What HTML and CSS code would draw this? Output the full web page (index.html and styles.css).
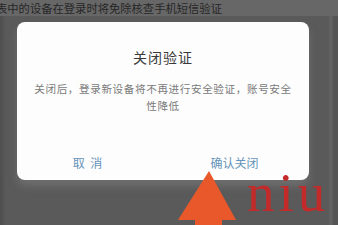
FILE: index.html
```html
<!DOCTYPE html>
<html lang="zh">
<head>
<meta charset="utf-8">
<link rel="stylesheet" href="styles.css">
</head>
<body>
<div class="page">
  <div class="topline">表中的设备在登录时将免除核查手机短信验证</div>
  <div class="stage">
    <div class="dialog">
      <div class="title">关闭验证</div>
      <div class="message"><span class="line">关闭后，登录新设备将不再进行安全验证，账号安全</span><span class="line">性降低</span></div>
      <div class="actions">
        <div class="btn">取 消</div>
        <div class="btn">确认关闭</div>
      </div>
    </div>
  </div>
  <svg class="arrow" width="60" height="55" viewBox="0 0 60 55">
    <polygon points="31,0 58,49 0,49" fill="#e9582b"/>
    <rect x="17" y="46" width="27" height="9" fill="#e9582b"/>
  </svg>
  <div class="mark">niu</div>
</div>
</body>
</html>
```
FILE: styles.css
```css
html, body {
  margin: 0;
  padding: 0;
}
body {
  width: 338px;
  height: 225px;
  overflow: hidden;
  background: #575757;
  font-family: "Noto Sans CJK SC", "Noto Sans", sans-serif;
}
.page {
  position: relative;
  width: 338px;
  height: 225px;
  display: flex;
  flex-direction: column;
  background: linear-gradient(to right, #4e4e4e 0, #5a5a5a 6px, #5a5a5a 328px, #666 331px, #555 334px);
}
.topline {
  height: 16px;
  line-height: 16px;
  margin-left: -4px;
  font-size: 11.3px;
  color: #262626;
  white-space: nowrap;
  background: #676767;
}
.stage {
  flex: 1;
  padding: 6px 0 0 17px;
}
.dialog {
  width: 292px;
  height: 158px;
  background: #fdfdfd;
  border-radius: 8px;
  display: flex;
  flex-direction: column;
  box-shadow: 0 6px 8px rgba(150,150,150,0.35);
}
.title {
  margin-top: 26px;
  text-align: center;
  font-size: 14px;
  line-height: 18px;
  color: #3a3a3a;
  letter-spacing: 1px;
}
.message {
  margin: 14px 0 0 0;
  display: flex;
  flex-direction: column;
  align-items: center;
  font-size: 10.6px;
  line-height: 17px;
  color: #7a7a7a;
  letter-spacing: 0.6px;
}
.line {
  white-space: nowrap;
}
.actions {
  margin-top: auto;
  height: 34px;
  display: flex;
  align-items: center;
}
.btn {
  flex: 1;
  text-align: center;
  font-size: 12px;
  color: #6593b9;
  padding-bottom: 2px;
}
.btn:first-child {
  padding-right: 6px;
  word-spacing: 3px;
}
.btn:last-child {
  padding-right: 4px;
}
.arrow {
  position: absolute;
  left: 178px;
  top: 171px;
}
.mark {
  position: absolute;
  left: 247px;
  top: 173px;
  font-family: "Liberation Serif", serif;
  font-size: 55px;
  line-height: 40px;
  color: #c32a2a;
  letter-spacing: 4px;
}
```
